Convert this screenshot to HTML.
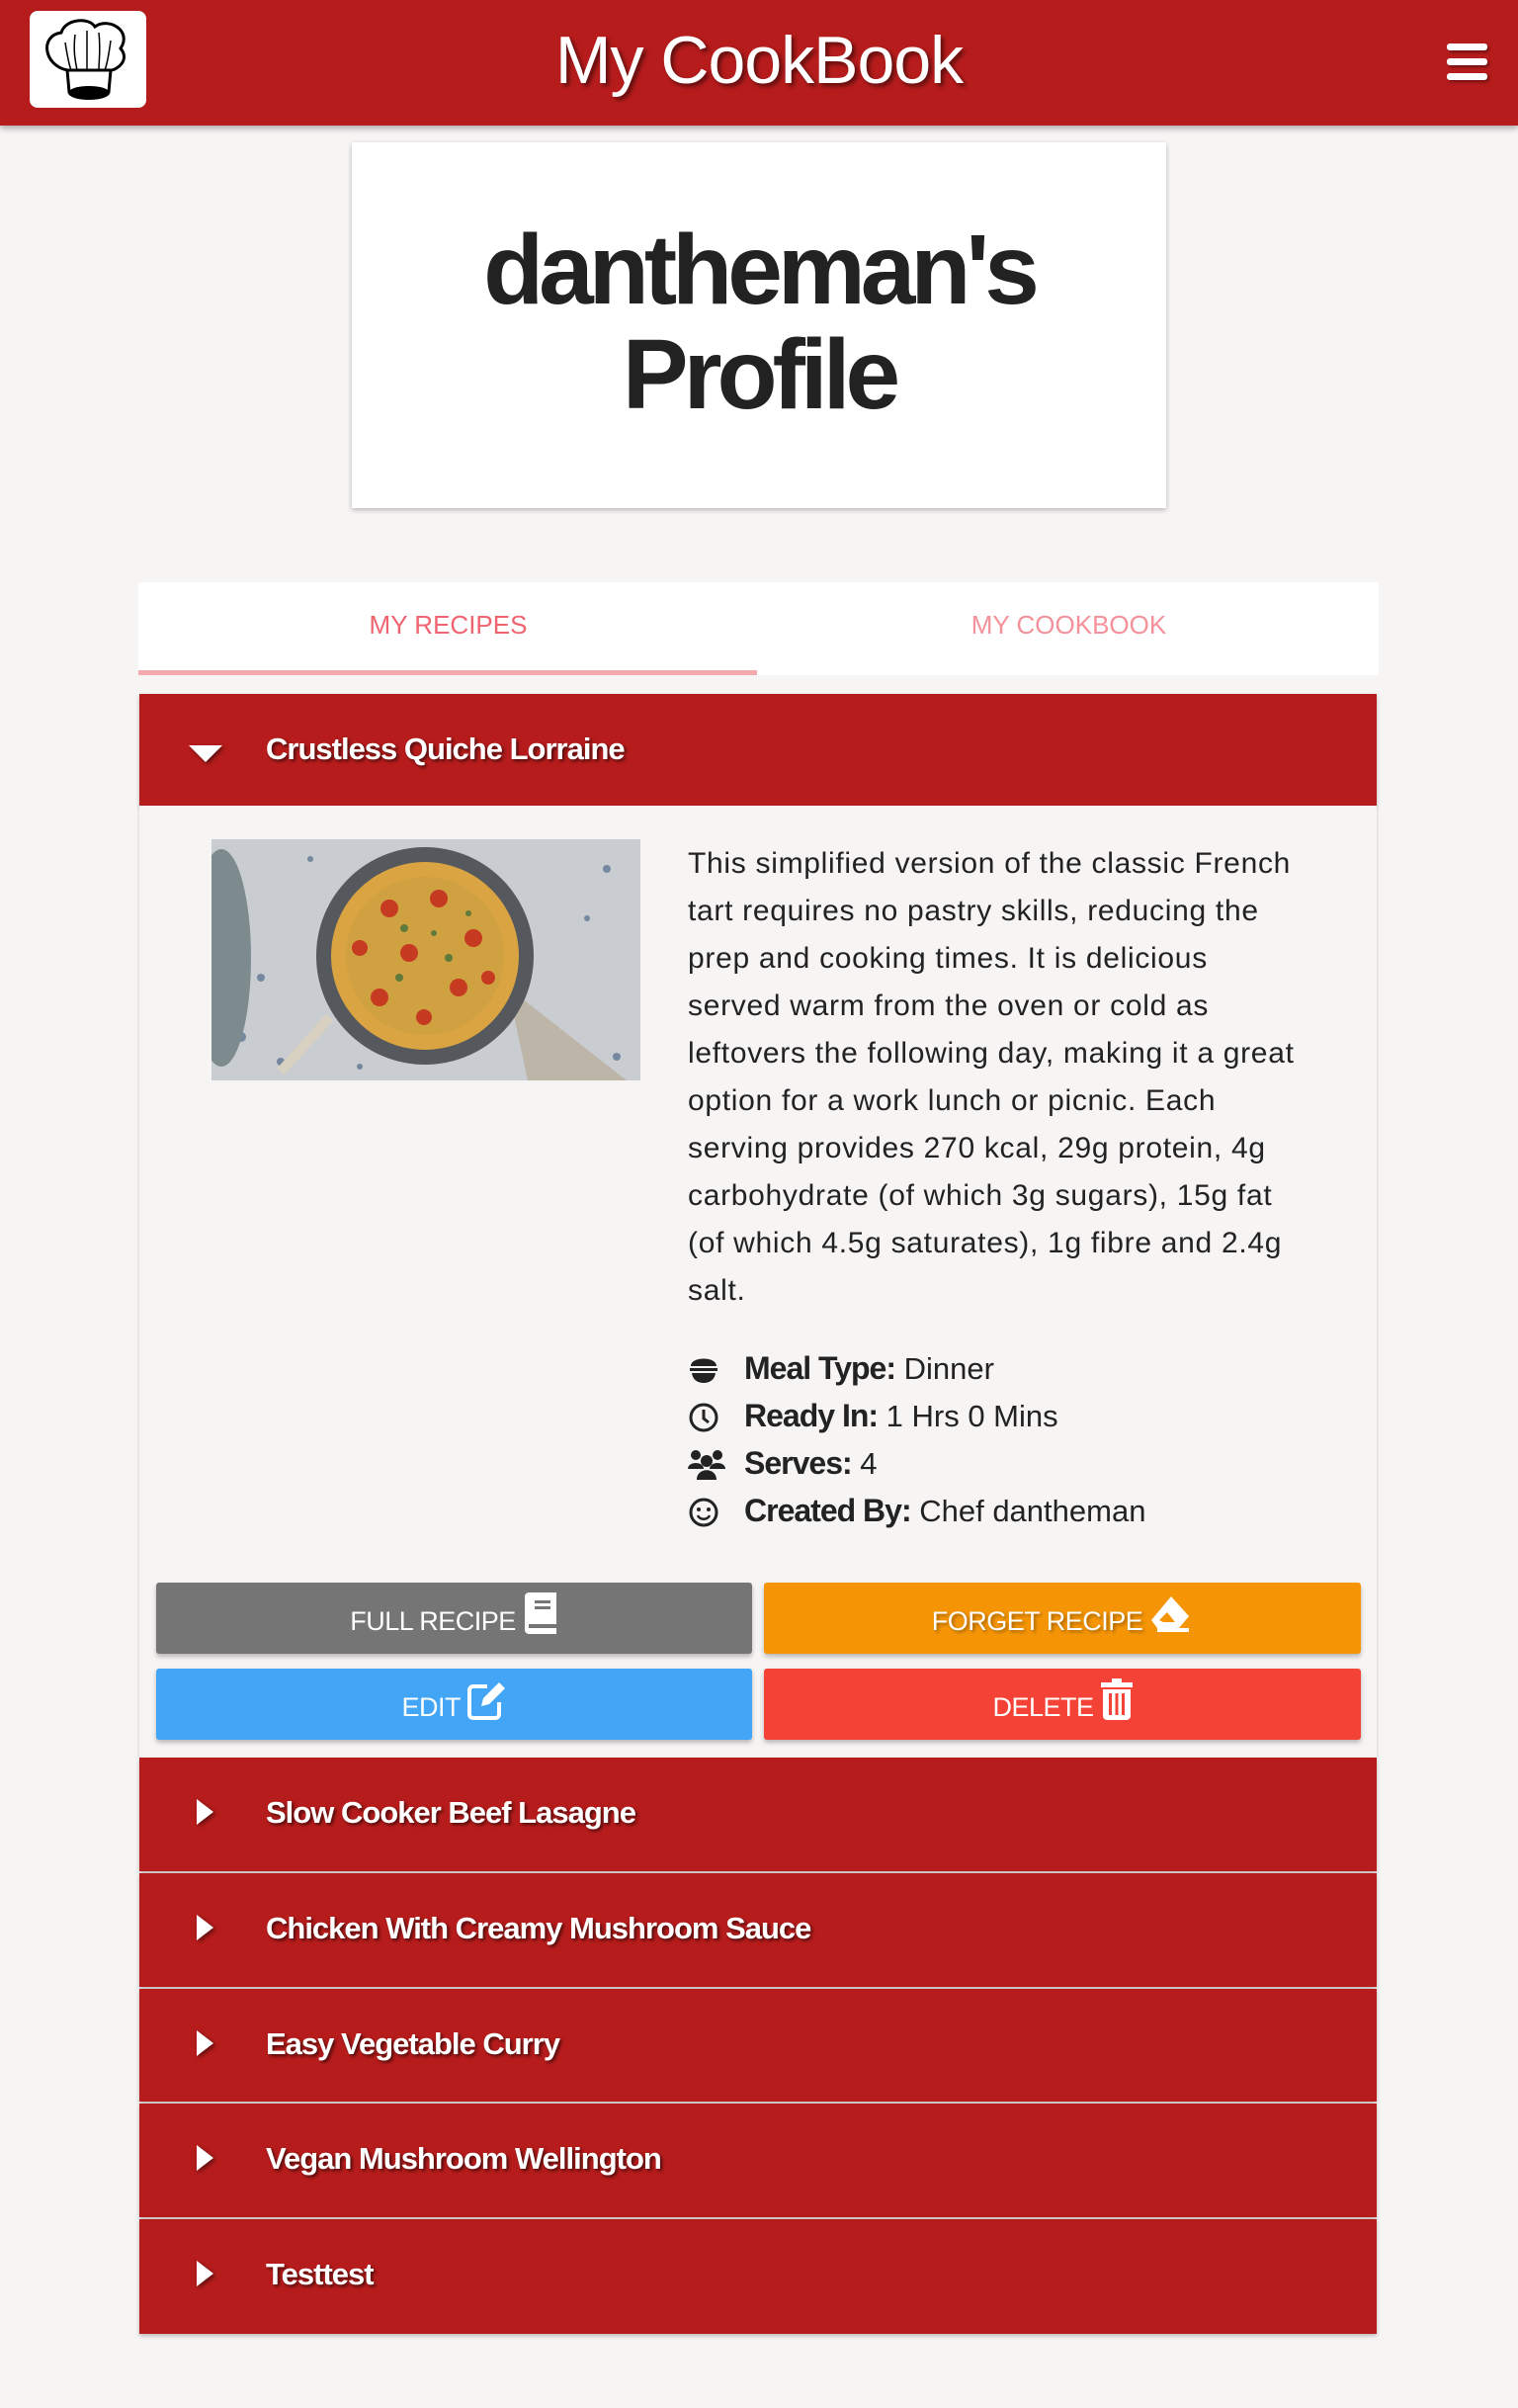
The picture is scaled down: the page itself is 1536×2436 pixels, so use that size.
<!DOCTYPE html>
<html><head><meta charset="utf-8"><style>
*{box-sizing:border-box;margin:0;padding:0}
body{width:1536px;height:2436px;background:#f7f4f4;font-family:"Liberation Sans",sans-serif;position:relative;overflow:hidden}
.hdr{position:absolute;left:0;top:0;width:1536px;height:127px;background:#b71c1c;box-shadow:0 3px 6px rgba(0,0,0,.3)}
.logo{position:absolute;left:30px;top:11px;width:118px;height:98px;background:#fff;border-radius:8px}
.ttl{position:absolute;left:0;width:1536px;top:22px;text-align:center;color:#fff;font-size:68px;letter-spacing:-1px;text-shadow:3px 3px 4px rgba(0,0,0,.5)}
.ham{position:absolute;left:1464px;width:41px;height:7px;background:#fff;border-radius:3px;box-shadow:2px 2px 3px rgba(0,0,0,.4)}
.card{position:absolute;left:356px;top:144px;width:824px;height:370px;background:#fff;box-shadow:0 2px 5px rgba(0,0,0,.25);text-align:center;font-weight:bold;font-size:100px;letter-spacing:-5px;line-height:106px;color:#222;padding-top:76px}
.tabs{position:absolute;left:140px;top:589px;width:1255px;height:94px;background:#fff}
.tab{position:absolute;top:28px;font-size:26px;width:627px;text-align:center}
.acc{position:absolute;left:141px;width:1252px;background:#b71c1c;color:#fff;font-weight:bold;font-size:31px;letter-spacing:-1px;text-shadow:2px 2px 3px rgba(0,0,0,.6);box-shadow:0 2px 4px rgba(0,0,0,.25)}
.acc span{position:absolute;left:128px;top:38px}
.tri{position:absolute;left:58px;top:42px;width:0;height:0;border-top:13px solid transparent;border-bottom:13px solid transparent;border-left:17px solid #fff;filter:drop-shadow(2px 2px 2px rgba(0,0,0,.5))}
.down{position:absolute;left:50px;top:52px;width:0;height:0;border-left:17px solid transparent;border-right:17px solid transparent;border-top:17px solid #fff;filter:drop-shadow(2px 2px 2px rgba(0,0,0,.5))}
.body{position:absolute;left:141px;top:815px;width:1252px;height:963px;background:#f7f4f4;box-shadow:0 1px 3px rgba(0,0,0,.2)}
.desc{position:absolute;left:696px;top:850px;width:618px;font-size:30px;letter-spacing:.7px;line-height:48px;color:#222}
.meta{position:absolute;left:696px;font-size:31px;color:#222}
.meta b{font-size:32px;letter-spacing:-1px}
.meta svg{position:absolute;left:0;top:4px}
.meta .t{position:absolute;left:57px;white-space:nowrap;top:0}
.btn{position:absolute;height:72px;color:#fff;font-size:27px;letter-spacing:-.5px;text-align:center;line-height:78px;border-radius:3px;box-shadow:0 3px 5px rgba(0,0,0,.25)}
</style></head><body>
<div class="hdr">
 <div class="logo"><svg width="118" height="98" viewBox="0 0 118 98"><path d="M38 60 C14 55 10 25 32 22 C36 8 60 6 66 16 C80 6 104 20 92 38 C102 50 88 60 82 60 Z" fill="#fff" stroke="#000" stroke-width="3"/><path d="M46 24 C44 40 46 50 48 60 M58 20 C58 40 58 50 58 60 M70 22 C72 40 70 50 70 60 M36 32 C38 45 40 55 42 60 M82 30 C80 45 78 55 76 60" stroke="#000" stroke-width="1.5" fill="none"/><path d="M38 60 L82 60 L80 82 L40 82 Z" fill="#fff" stroke="#000" stroke-width="3"/><ellipse cx="60" cy="83" rx="21" ry="7" fill="#000"/></svg></div>
 <div class="ttl">My CookBook</div>
 <div class="ham" style="top:44px"></div><div class="ham" style="top:59px"></div><div class="ham" style="top:74px"></div>
</div>
<div class="card">dantheman's<br>Profile</div>
<div class="tabs">
 <div class="tab" style="left:0;color:#ef6470">MY RECIPES</div>
 <div class="tab" style="left:628px;color:#f4919a">MY COOKBOOK</div>
 <div style="position:absolute;left:0;top:89px;width:626px;height:5px;background:#f4a9ae"></div>
</div>
<div class="acc" style="top:702px;height:113px"><div class="down"></div><span>Crustless Quiche Lorraine</span></div>
<div class="body"></div>
<svg style="position:absolute;left:214px;top:849px" width="434" height="244" viewBox="0 0 434 244">
 <rect width="434" height="244" fill="#c9ccd0"/>
 <g fill="#3d5a80" opacity=".6"><circle cx="30" cy="200" r="5"/><circle cx="70" cy="225" r="4"/><circle cx="400" cy="30" r="4"/><circle cx="380" cy="80" r="3"/><circle cx="100" cy="20" r="3"/><circle cx="50" cy="140" r="4"/><circle cx="150" cy="230" r="3"/><circle cx="410" cy="220" r="4"/></g>
 <ellipse cx="10" cy="120" rx="30" ry="110" fill="#7d8a8e"/>
 <path d="M300 150 L420 244 L320 244 Z" fill="#bdb6a8"/>
 <circle cx="216" cy="118" r="110" fill="#55585c"/>
 <circle cx="216" cy="118" r="95" fill="#d9a441"/>
 <circle cx="216" cy="118" r="80" fill="#c9a040" opacity=".6"/>
 <g fill="#c73a22"><circle cx="180" cy="70" r="9"/><circle cx="230" cy="60" r="9"/><circle cx="265" cy="100" r="9"/><circle cx="200" cy="115" r="9"/><circle cx="250" cy="150" r="9"/><circle cx="170" cy="160" r="9"/><circle cx="215" cy="180" r="8"/><circle cx="150" cy="110" r="8"/><circle cx="280" cy="140" r="7"/></g>
 <g fill="#5f7a3a"><circle cx="195" cy="90" r="4"/><circle cx="240" cy="120" r="4"/><circle cx="225" cy="95" r="3"/><circle cx="190" cy="140" r="4"/><circle cx="260" cy="75" r="3"/></g>
 <path d="M120 180 L70 235" stroke="#d8d0c0" stroke-width="10"/>
</svg>
<div class="desc">This simplified version of the classic French tart requires no pastry skills, reducing the prep and cooking times. It is delicious served warm from the oven or cold as leftovers the following day, making it a great option for a work lunch or picnic. Each serving provides 270 kcal, 29g protein, 4g carbohydrate (of which 3g sugars), 15g fat (of which 4.5g saturates), 1g fibre and 2.4g salt.</div>
<div class="meta" style="top:1366px"><svg width="32" height="30" viewBox="0 0 32 30"><path d="M3 12 C3 2 29 2 29 12 Z M2 14 H30 V17 H2 Z M4 19 H28 C27 26 22 29 16 29 C10 29 5 26 4 19 Z" fill="#222"/></svg><div class="t"><b>Meal Type:</b> Dinner</div></div>
<div class="meta" style="top:1414px"><svg width="32" height="32" viewBox="0 0 32 32"><circle cx="16" cy="16" r="13" fill="none" stroke="#222" stroke-width="3"/><path d="M16 8 V17 L21 21" stroke="#222" stroke-width="3" fill="none"/></svg><div class="t"><b>Ready In:</b> 1 Hrs 0 Mins</div></div>
<div class="meta" style="top:1462px"><svg width="38" height="32" viewBox="0 0 38 32"><circle cx="8" cy="6" r="5" fill="#222"/><circle cx="30" cy="6" r="5" fill="#222"/><circle cx="19" cy="12" r="6" fill="#222"/><path d="M0 20 C0 12 16 12 16 20 Z M22 20 C22 12 38 12 38 20 Z M9 31 C9 18 29 18 29 31 Z" fill="#222"/></svg><div class="t"><b>Serves:</b> 4</div></div>
<div class="meta" style="top:1510px"><svg width="32" height="32" viewBox="0 0 32 32"><circle cx="16" cy="16" r="13" fill="none" stroke="#222" stroke-width="3"/><circle cx="11" cy="13" r="2" fill="#222"/><circle cx="21" cy="13" r="2" fill="#222"/><path d="M10 19 C12 24 20 24 22 19" stroke="#222" stroke-width="2.5" fill="none"/></svg><div class="t"><b>Created By:</b> Chef dantheman</div></div>

<div class="btn" style="left:158px;top:1601px;width:603px;background:#757575">FULL RECIPE <svg width="36" height="42" viewBox="0 0 36 42" style="vertical-align:-4px"><path d="M2 4 C2 2 4 0 6 0 H34 V32 H6 V36 H34 V42 H6 C4 42 2 40 2 38 Z" fill="#fff"/><rect x="12" y="8" width="16" height="3" fill="#757575"/><rect x="12" y="14" width="16" height="3" fill="#757575"/></svg></div>
<div class="btn" style="left:773px;top:1601px;width:604px;background:#f59506;text-shadow:2px 2px 3px rgba(0,0,0,.35)">FORGET RECIPE <svg width="44" height="40" viewBox="0 0 44 40" style="vertical-align:-4px"><path d="M22 2 L40 22 L30 34 H8 L2 26 Z" fill="#fff"/><path d="M10 26 L18 18 L26 28 H14 Z" fill="#f59506"/><rect x="8" y="34" width="32" height="4" fill="#fff"/></svg></div>
<div class="btn" style="left:158px;top:1688px;width:603px;background:#42a5f5">EDIT <svg width="40" height="40" viewBox="0 0 40 40" style="vertical-align:-4px"><path d="M20 6 H6 C3 6 2 8 2 10 V34 C2 37 4 38 6 38 H28 C31 38 32 36 32 34 V22" fill="none" stroke="#fff" stroke-width="4"/><path d="M14 26 L16 18 L32 2 L38 8 L22 24 Z" fill="#fff"/></svg></div>
<div class="btn" style="left:773px;top:1688px;width:604px;background:#f44336">DELETE <svg width="32" height="42" viewBox="0 0 32 42" style="vertical-align:-4px"><rect x="0" y="4" width="32" height="5" fill="#fff"/><rect x="11" y="0" width="10" height="5" fill="#fff"/><path d="M2 11 H30 V38 C30 40 28 42 26 42 H6 C4 42 2 40 2 38 Z" fill="#fff"/><g fill="#f44336"><rect x="8" y="15" width="3" height="22"/><rect x="14.5" y="15" width="3" height="22"/><rect x="21" y="15" width="3" height="22"/></g></svg></div>

<div class="acc" style="top:1778px;height:115px"><div class="tri"></div><span>Slow Cooker Beef Lasagne</span></div>
<div class="acc" style="top:1895px;height:115px"><div class="tri"></div><span>Chicken With Creamy Mushroom Sauce</span></div>
<div class="acc" style="top:2012px;height:114px"><div class="tri"></div><span>Easy Vegetable Curry</span></div>
<div class="acc" style="top:2128px;height:115px"><div class="tri"></div><span>Vegan Mushroom Wellington</span></div>
<div class="acc" style="top:2245px;height:116px"><div class="tri"></div><span>Testtest</span></div>
</body></html>
